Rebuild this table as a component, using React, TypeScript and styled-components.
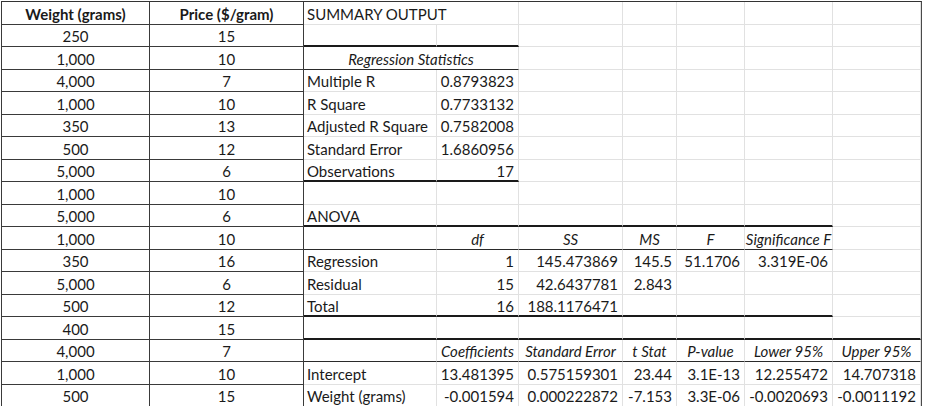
import React from 'react';
import styled, { createGlobalStyle, css } from 'styled-components';

type Align = 'l' | 'c' | 'r';
type Edge = 'thick' | 'dark';
type Out = { t?: string; a?: Align; i?: boolean; span?: number; b?: Edge; open?: boolean };

const GlobalStyle = createGlobalStyle`
  html, body {
    margin: 0;
    background: #fff;
  }
  body {
    font-family: Lato, "Liberation Sans", sans-serif;
    color: #1a1a1a;
  }
`;

const COLS = [149, 154, 133, 82, 104, 54, 68, 88, 88];

const data: Array<[string, string]> = [
    ['250', '15'],
    ['1,000', '10'],
    ['4,000', '7'],
    ['1,000', '10'],
    ['350', '13'],
    ['500', '12'],
    ['5,000', '6'],
    ['1,000', '10'],
    ['5,000', '6'],
    ['1,000', '10'],
    ['350', '16'],
    ['5,000', '6'],
    ['500', '12'],
    ['400', '15'],
    ['4,000', '7'],
    ['1,000', '10'],
    ['500', '15'],
];

const L = (t: string, b?: Edge): Out => ({ t, a: 'l', b });
const R = (t: string, b?: Edge): Out => ({ t, a: 'r', b });
const H = (t: string): Out => ({ t, a: 'c', i: true, b: 'dark' });
const line = (n: number, b: Edge): Out[] => Array.from({ length: n }, () => ({ b }));

// columns C..I of the regression output, one array per sheet row
const output: Out[][] = [
    [{ t: 'SUMMARY OUTPUT', a: 'l', open: true }],
    line(2, 'thick'),
    [{ t: 'Regression Statistics', a: 'c', i: true, span: 2, b: 'dark' }],
    [L('Multiple R'), R('0.8793823')],
    [L('R Square'), R('0.7733132')],
    [L('Adjusted R Square'), R('0.7582008')],
    [L('Standard Error'), R('1.6860956')],
    [L('Observations', 'thick'), R('17', 'thick')],
    [],
    [L('ANOVA', 'thick'), ...line(5, 'thick')],
    [{ b: 'dark' }, H('df'), H('SS'), H('MS'), H('F'), H('Significance F')],
    [L('Regression'), R('1'), R('145.473869'), R('145.5'), R('51.1706'), R('3.319E-06')],
    [L('Residual'), R('15'), R('42.6437781'), R('2.843')],
    [L('Total', 'thick'), R('16', 'thick'), R('188.1176471', 'thick'), ...line(3, 'thick')],
    line(7, 'thick'),
    [{ b: 'dark' }, H('Coefficients'), H('Standard Error'), H('t Stat'), H('P-value'), H('Lower 95%'), H('Upper 95%')],
    [L('Intercept'), R('13.481395'), R('0.575159301'), R('23.44'), R('3.1E-13'), R('12.255472'), R('14.707318')],
    [L('Weight (grams)'), R('-0.001594'), R('0.000222872'), R('-7.153'), R('3.3E-06'), R('-0.0020693'), R('-0.0011192')],
];

function fill(row: Out[]): Out[] {
    const used = row.reduce((n, c) => n + (c.span || 1), 0);
    return [...row, ...Array.from({ length: 7 - used }, () => ({}))];
}

function Regression() {
    return (
        <>
            <GlobalStyle />
            <Sheet>
                <DataCell $head $first>Weight (grams)</DataCell>
                <DataCell $head>Price ($/gram)</DataCell>
                {fill(output[0]).map((c, j) => <OutputCell key={'h' + j} cell={c} />)}
                {data.map(([w, p], i) => (
                    <React.Fragment key={i}>
                        <DataCell $first>{w}</DataCell>
                        <DataCell>{p}</DataCell>
                        {fill(output[i + 1]).map((c, j) => <OutputCell key={j} cell={c} />)}
                    </React.Fragment>
                ))}
            </Sheet>
        </>
    );
}

function OutputCell({ cell }: { cell: Out }) {
    return (
        <OutCell
            $align={cell.a || 'l'}
            $italic={!!cell.i}
            $span={cell.span || 1}
            $edge={cell.b}
            $open={!!cell.open}
        >
            {cell.t}
        </OutCell>
    );
}

const Sheet = styled.div`
  display: grid;
  grid-template-columns: ${COLS.map(c => c + 'px').join(' ')};
  grid-template-rows: repeat(9, 23px 22px);
  width: max-content;
  margin: 1px 0 0 1px;
  border-top: 1px solid #333;
  border-right: 1px solid #4a4a4a;
  font-size: 15px;
  line-height: 17px;
`;

const DataCell = styled.div<{ $head?: boolean; $first?: boolean }>`
  display: flex;
  align-items: flex-end;
  justify-content: center;
  padding-bottom: 1px;
  border-right: 1px solid #3a3a3a;
  border-bottom: 1px solid #3a3a3a;
  ${p => p.$first && css`border-left: 1px solid #3a3a3a;`}
  font-weight: ${p => (p.$head ? 700 : 400)};
  white-space: nowrap;
`;

const justify = { l: 'flex-start', c: 'center', r: 'flex-end' };

const OutCell = styled.div<{ $align: Align; $italic: boolean; $span: number; $edge?: Edge; $open: boolean }>`
  grid-column: span ${p => p.$span};
  display: flex;
  align-items: flex-end;
  justify-content: ${p => justify[p.$align]};
  padding: 0 ${p => (p.$align === 'r' ? 4 : 0)}px 1px ${p => (p.$align === 'l' ? 3 : 0)}px;
  border-right: ${p => (p.$open ? 'none' : '1px solid #e1e1e1')};
  border-bottom: 1px solid #e1e1e1;
  ${p => p.$edge === 'dark' && css`border-bottom: 1px solid #2a2a2a;`}
  ${p => p.$edge === 'thick' && css`
    border-bottom: 2px solid #1a1a1a;
    padding-bottom: 0;
  `}
  font-style: ${p => (p.$italic ? 'italic' : 'normal')};
  white-space: nowrap;
  overflow: ${p => (p.$open ? 'visible' : 'hidden')};
`;

export default Regression;
